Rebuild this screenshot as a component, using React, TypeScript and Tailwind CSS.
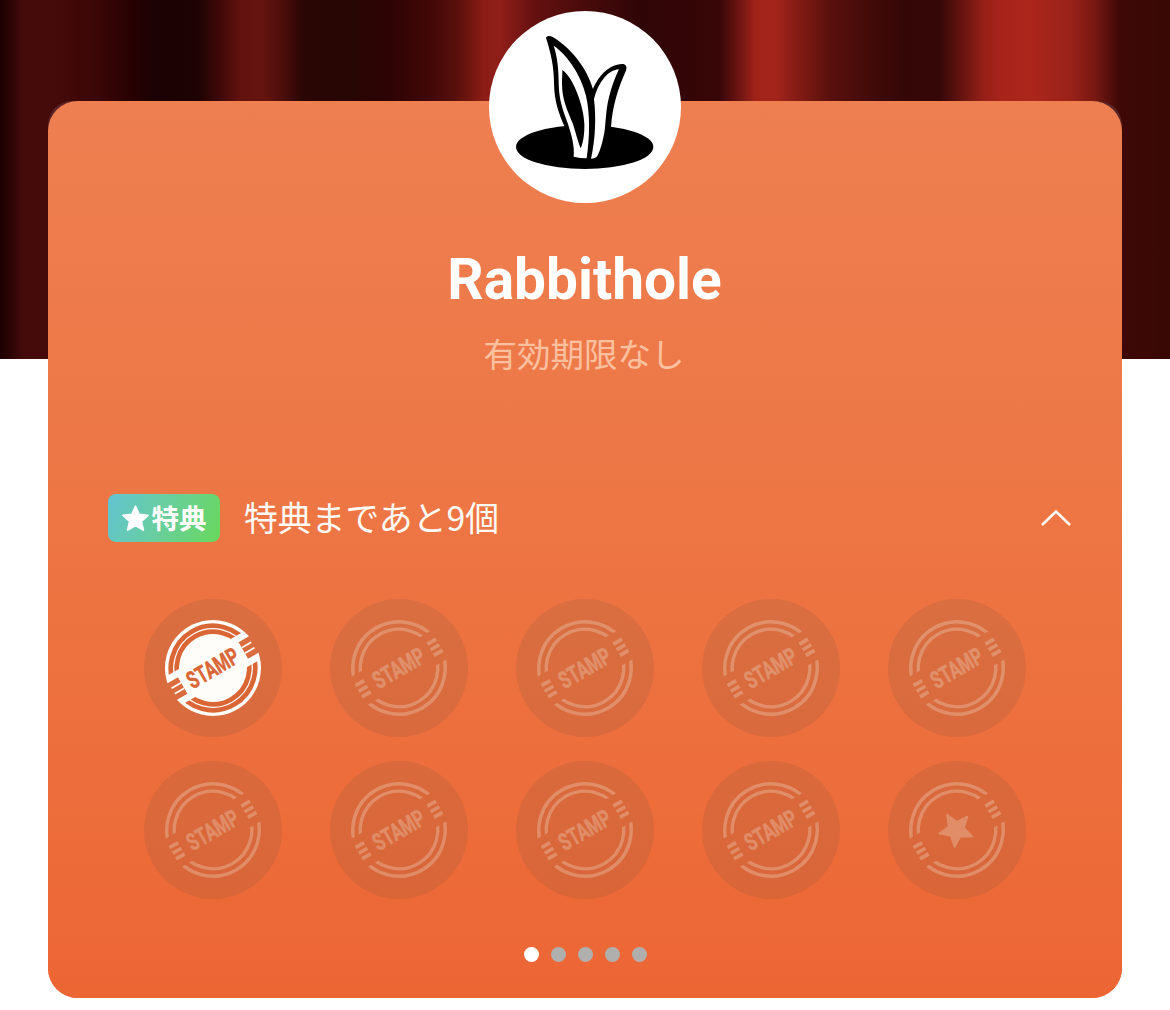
const curtain: [number, string][] = [
  [0, "#1e0203"], [11, "#2d0506"], [22, "#440b0a"], [60, "#430a08"], [100, "#3a0606"],
  [135, "#260102"], [155, "#1c0204"], [198, "#1e0304"], [218, "#3c0807"], [240, "#62120f"],
  [262, "#66140f"], [282, "#4e0e0b"], [303, "#2a0604"], [345, "#260604"], [390, "#2e0304"],
  [430, "#420807"], [455, "#56100c"], [470, "#721610"], [482, "#8a1d16"], [500, "#901e18"],
  [535, "#641110"], [590, "#460a0a"], [640, "#300506"], [720, "#380606"], [740, "#701613"],
  [755, "#a0231a"], [775, "#a4241b"], [800, "#801b14"], [830, "#5a100c"], [870, "#420b09"],
  [905, "#340706"], [940, "#360707"], [958, "#5e120e"], [985, "#982018"], [1002, "#a8241b"],
  [1030, "#ac261c"], [1070, "#9a2219"], [1095, "#781812"], [1120, "#3e0807"], [1170, "#380804"],
];

const curtainGradient = `linear-gradient(to right, ${curtain
  .map(([x, c]) => `${c} ${x}px`)
  .join(", ")})`;

function RabbitLogo() {
  return (
    <svg viewBox="27 33 576 576" className="size-48 shrink-0">
      <circle cx="315" cy="321" r="288" fill="#fff" />
      <ellipse cx="314" cy="441" rx="206" ry="66" />
      <path d="M198 113C201 106 211 107 218 111C270 142 318 198 339 267C352 235 385 190 430 192C441 195 441 205 437 214C412 270 398 320 393 380L370 450H280L254 380C236 340 223 305 222 250C222 200 213 160 198 113Z" />
      <path fill="#fff" d="M221 137C262 165 303 225 318 287C331 345 329 410 320 475Q300 475 281 470C284 440 276 410 264 372C248 330 237 300 236 250C236 208 232 170 221 137Z" />
      <path d="M247 210C280 232 312 320 313 372C314 402 309 430 302 445C292 420 288 400 278 370C262 330 246 300 246 250Z" />
      <path fill="#fff" d="M417 208C380 210 352 255 342 298C349 355 346 420 333 476Q346 476 352 468C362 448 368 425 373 398C378 368 377 330 387 292C394 262 404 235 417 208Z" />
    </svg>
  );
}

const starPath =
  "M0-17.6L4.9-6.4L17-5.3L7.9 2.8L10.6 14.8L0 8.5L-10.6 14.8L-7.9 2.8L-17-5.3L-4.9-6.4Z";

function StampText({ fill }: { fill: string }) {
  return (
    <text
      x="-28.5"
      y="8.3"
      fill={fill}
      stroke={fill}
      strokeWidth="0.5"
      fontSize="24"
      fontWeight="700"
      textLength="56.5"
      lengthAdjust="spacingAndGlyphs"
      className="font-['Roboto',sans-serif]"
    >
      STAMP
    </text>
  );
}

const bars = [-6.5, 0, 6.5];

function Stamp({ kind }: { kind: "filled" | "empty" | "goal" }) {
  const ink = "#da6636";
  const faded = "#efdcc8";
  return (
    <div className="flex size-[138px] rounded-full bg-[#5c4b3f]/13">
      <svg viewBox="-69 -69 138 138" className="size-[138px] overflow-visible">
        <defs>
          <clipPath id="halves">
            <path d="M-50-50H50V-16.3H-50ZM-50 16.3H50V50H-50Z" />
          </clipPath>
          <clipPath id="disc">
            <path d="M-50-50H50V-9.5H35V9.5H50V50H-50V9.5H-35V-9.5H-50Z" />
          </clipPath>
        </defs>
        {kind === "filled" ? (
          <g transform="rotate(-30)">
            <circle r="48" fill="#fffdfa" clipPath="url(#disc)" />
            <g clipPath="url(#halves)" fill="none" stroke={ink} strokeWidth="4.7">
              <circle r="42.2" />
              <circle r="36.3" />
            </g>
            <path d="M35-3.2H46M35 3.2H46M-35-3.2H-46M-35 3.2H-46" stroke="#fffdfa" strokeWidth="1.7" />
            <StampText fill={ink} />
          </g>
        ) : (
          <g opacity="0.32">
            <g transform="rotate(-30)">
              <g clipPath="url(#halves)" fill="none" stroke={faded} strokeWidth="3.4">
                <circle r="46.2" />
                <circle r="38.8" />
              </g>
              {bars.map((y) => (
                <path key={y} d={`M36.5 ${y}H46.5M-36.5 ${y}H-46.5`} stroke={faded} strokeWidth="3.6" />
              ))}
              {kind === "empty" && <StampText fill={faded} />}
            </g>
            {kind === "goal" && (
              <path d={starPath} transform="translate(-1 -0.5) rotate(-31) scale(0.96)" fill={faded} stroke={faded} strokeWidth="2" strokeLinejoin="round" />
            )}
          </g>
        )}
      </svg>
    </div>
  );
}

const stamps: ("filled" | "empty" | "goal")[] = [
  "filled", "empty", "empty", "empty", "empty",
  "empty", "empty", "empty", "empty", "goal",
];

export default function App() {
  return (
    <div className="relative isolate h-[1010px] w-[1170px] overflow-hidden bg-white px-12 pt-[101px] font-['Noto_Sans_CJK_JP',sans-serif]">
      <div className="absolute inset-x-0 top-0 -z-10 h-[359px]" style={{ backgroundImage: curtainGradient }} />
      <div className="h-[897px] rounded-t-[24px] rounded-b-[30px] bg-linear-to-b from-[#5a2326] from-50% to-[#ec6634] to-50%">
        <main className="flex h-full flex-col items-center rounded-[30px] bg-linear-to-b from-[#ee7f50] via-[#ed7543] to-[#ec6634] text-[#fffaf5]">
          <div className="-mt-[90px] flex">
            <RabbitLogo />
          </div>
          <h1 className="mt-[45px] mr-px font-['Roboto',sans-serif] text-[56.8px] leading-[64px] font-bold whitespace-nowrap text-white">Rabbithole</h1>
          <p className="mt-[17px] mr-[2px] text-[33.5px] leading-[48px] text-[#fbc0a0]">有効期限なし</p>
          <div className="mt-[117px] flex h-12 w-full items-center pr-[51px] pl-[60px]">
            <span className="flex h-12 w-28 items-center justify-center rounded-lg bg-linear-[110deg] from-[#62c4d2] via-[#69cf9c] to-[#68d85c] text-white">
              <svg viewBox="-18.5 -19 37 36" className="h-[27px] w-[27px] shrink-0">
                <path d={starPath} fill="currentColor" stroke="currentColor" strokeWidth="2.6" strokeLinejoin="round" />
              </svg>
              <span className="mb-[3px] ml-[3px] text-[27.5px] leading-[40px] font-bold whitespace-nowrap">特典</span>
            </span>
            <span className="mb-[3px] ml-6 flex-1 text-[33.8px] leading-[48px] whitespace-nowrap">特典まであと9個</span>
            <svg viewBox="0 0 30 18" className="h-[18px] w-[30px]" fill="none" stroke="currentColor" strokeWidth="2.6">
              <path d="M1 16L15 2.5L29 16" />
            </svg>
          </div>
          <div className="mt-[57px] grid grid-cols-5 gap-x-12 gap-y-6">
            {stamps.map((kind, i) => (
              <Stamp key={i} kind={kind} />
            ))}
          </div>
          <div className="mt-12 flex gap-3">
            {[0, 1, 2, 3, 4].map((i) => (
              <span key={i} className={i === 0 ? "size-[15px] rounded-full bg-white" : "size-[15px] rounded-full bg-[#b1afae]"} />
            ))}
          </div>
        </main>
      </div>
    </div>
  );
}
